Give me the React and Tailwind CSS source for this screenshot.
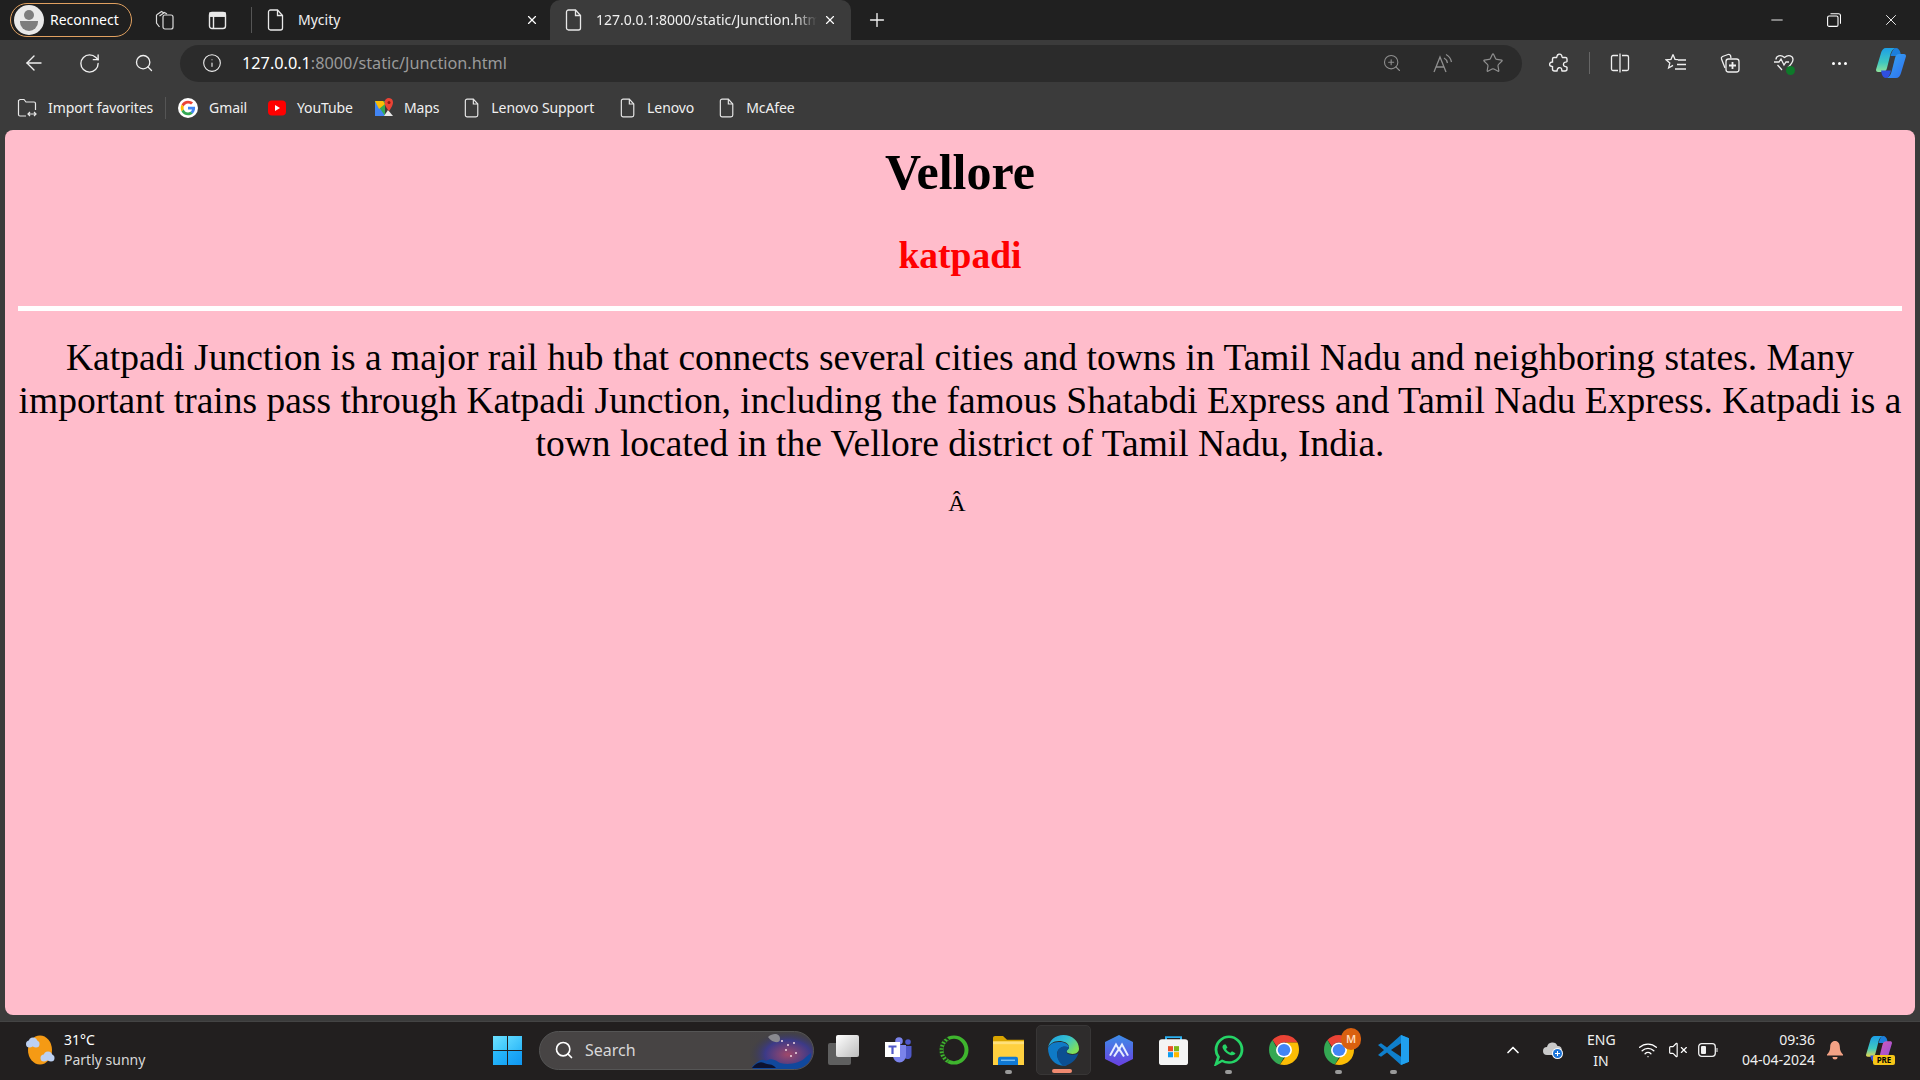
import { ArrowLeft, RotateCw, Search, Info, ZoomIn, Star, Plus, X, Minus, ChevronUp, Wifi, VolumeX } from "lucide-react";

const ui = { fontFamily: '"Noto Sans", sans-serif' };

function Doc({ className = "w-[18px] h-[22px]" }) {
  return (
    <svg className={className} viewBox="0 0 18 22" fill="none" stroke="#e8e8e8" strokeWidth="1.3">
      <path d="M3.5 1h7l5 5.5V19a2 2 0 0 1-2 2h-10a2 2 0 0 1-2-2V3a2 2 0 0 1 2-2z" />
      <path d="M10.5 1v5.5h5" />
    </svg>
  );
}

function Avatar() {
  return (
    <div className="w-[30px] h-[30px] rounded-full bg-[#e9e9e9] flex flex-col items-center justify-center overflow-hidden">
      <div className="w-[10px] h-[10px] rounded-full bg-[#7d7d7d]" />
      <div className="w-[18px] h-[10px] mt-[1px] rounded-b-full bg-[#7d7d7d]" />
    </div>
  );
}

function Workspaces() {
  return (
    <svg className="w-5 h-5" viewBox="0 0 20 20" fill="none" stroke="#dcdcdc" strokeWidth="1.2">
      <path d="M1.5 5l5-3.5L9 3M1.5 5v8l3 4" />
      <path d="M4.5 6l5-3.5L12 4" />
      <rect x="8" y="5" width="10" height="14" rx="2" />
    </svg>
  );
}

function TabActions() {
  return (
    <svg className="w-[19px] h-[19px]" viewBox="0 0 19 19" fill="none" stroke="#e8e8e8" strokeWidth="1.4">
      <rect x="1.5" y="1.5" width="16" height="16" rx="2.5" />
      <path d="M1.5 5h16M5.5 5v12.5" />
      <path d="M2 2h15v3H2z" fill="#e8e8e8" />
    </svg>
  );
}

function GoogleG({ size = "w-5 h-5" }) {
  return (
    <svg className={size} viewBox="0 0 48 48">
      <circle cx="24" cy="24" r="24" fill="#fff" />
      <path fill="#EA4335" d="M24 13c3 0 5.400 1 7.300 2.800l4.800-4.800C33 8.200 28.900 6.500 24 6.500 17.200 6.500 11.300 10.400 8.400 16.100l5.600 4.300C15.400 16.200 19.300 13 24 13z" />
      <path fill="#4285F4" d="M41 24.400c0-1.300-.1-2.200-.3-3.200H24v6.300h9.700c-.4 2.300-1.800 4.400-4 5.800l5.400 4.200C38.700 34.300 41 29.800 41 24.400z" />
      <path fill="#FBBC05" d="M14 27.600c-.4-1.100-.6-2.300-.6-3.600s.2-2.500.6-3.600l-5.600-4.300C7.200 18.500 6.500 21.200 6.500 24s.7 5.500 1.900 7.900l5.600-4.300z" />
      <path fill="#34A853" d="M24 41.500c4.800 0 8.800-1.600 11.100-4.300l-5.400-4.200c-1.500 1-3.400 1.700-5.700 1.700-4.700 0-8.600-3.200-10-7.400l-5.600 4.300c2.900 5.700 8.800 9.900 15.600 9.900z" />
    </svg>
  );
}

function YouTube() {
  return (
    <svg className="w-[18px] h-[18px]" viewBox="0 0 18 18">
      <rect x="0" y="1.500" width="18" height="15" rx="4" fill="#f00" />
      <path d="M7 6l5 3-5 3z" fill="#fff" />
    </svg>
  );
}

function MapsIcon() {
  return (
    <svg className="w-[18px] h-5" viewBox="0 0 18 20">
      <path d="M0 3h10v15H0z" fill="#34a853" />
      <path d="M0 3l10 15H0z" fill="#4285f4" />
      <path d="M0 3h8l2 3-6 5z" fill="#fbbc05" />
      <path d="M9 18l4-6 5 6z" fill="#e8e8e8" />
      <path d="M14 0a4.500 4.500 0 0 0-4.500 4.500C9.500 8 14 13 14 13s4-5 4-8.500A4.500 4.500 0 0 0 14 0z" fill="#ea4335" />
      <circle cx="14" cy="4.500" r="1.500" fill="#8c1c13" />
    </svg>
  );
}

function ImportFav() {
  return (
    <svg className="w-5 h-5" viewBox="0 0 20 20" fill="none" stroke="#e8e8e8" strokeWidth="1.2">
      <path d="M9 18H3a1.500 1.500 0 0 1-1.500-1.500V2.500L3 1.500h4l2 2.500h8a1.500 1.500 0 0 1 1.500 1.500V12" />
      <path d="M11 16h8M13 14l-2 2 2 2M17 14l2 2-2 2" />
    </svg>
  );
}

function ReadAloud() {
  return (
    <svg className="w-5 h-5" viewBox="0 0 20 20" fill="none" stroke="#8f8f8f" strokeWidth="1.3">
      <path d="M1 19L7 4l6 15M3 14h8" />
      <path d="M11 5c2 1 3 2.500 3.500 5M13 1.500c3 1.500 4.800 4 5.500 7.500" />
    </svg>
  );
}

function Extensions() {
  return (
    <svg className="w-5 h-5" viewBox="0 0 20 20" fill="none" stroke="#efefef" strokeWidth="1.4">
      <path d="M8 3.200a2.500 2.500 0 0 1 4.500-1c.6.800 0 1.800 1 2.300h3a1.500 1.500 0 0 1 1.500 1.500v2.500c-.6 1-1.800.4-2.600 1a2.400 2.400 0 0 0 0 3.800c.8.600 2 0 2.600 1v1.700a2 2 0 0 1-2 2h-3c-.6-1 .2-2.200-1-3a2.400 2.400 0 0 0-3.600 1.200c-.2.700-.2 1.300-.4 1.800H5.500a2 2 0 0 1-2-2v-2.500c-1-.6-2.400.2-2.800-1.500a2.500 2.500 0 0 1 2.800-3V6a1.500 1.500 0 0 1 1.500-1.500h2.500c.3-.4.500-.8.500-1.300z" />
    </svg>
  );
}

function SplitScreen() {
  return (
    <svg className="w-5 h-5" viewBox="0 0 20 20" fill="none" stroke="#efefef" strokeWidth="1.3">
      <path d="M8 2.500H3A1.500 1.500 0 0 0 1.500 4v12A1.500 1.500 0 0 0 3 17.500h5M12 2.500h5A1.500 1.500 0 0 1 18.500 4v12a1.500 1.500 0 0 1-1.500 1.500h-5M10 .5v19" />
    </svg>
  );
}

function Favorites() {
  return (
    <svg className="w-[21px] h-5" viewBox="0 0 21 20" fill="none" stroke="#efefef" strokeWidth="1.3">
      <path d="M8 1.500l2 4.800 3 .3M8 1.500L6 6.300l-5 .5 3.800 3.300L3.600 15l4.400-2.600" />
      <path d="M13 7h8M12 11.500h9M10 16h11" strokeWidth="1.600" />
    </svg>
  );
}

function Collections() {
  return (
    <svg className="w-5 h-5" viewBox="0 0 20 20" fill="none" stroke="#efefef" strokeWidth="1.3">
      <path d="M5 15L1.500 6a2 2 0 0 1 1-2.500L8 1.500a2 2 0 0 1 2.500 1L11 5" />
      <rect x="6" y="6" width="13" height="13" rx="2.500" />
      <path d="M12.500 9v7M9 12.500h7" strokeWidth="1.800" />
    </svg>
  );
}

function Health() {
  return (
    <div className="relative w-[21px] h-5">
      <svg className="w-[21px] h-5" viewBox="0 0 21 20" fill="none" stroke="#efefef" strokeWidth="1.3">
        <path d="M2 6.500C2 3 6.500 1 10.500 4.500 14.500 1 19 3 19 6.500c0 3-3 6-5 8M8 17L3.500 12" />
        <path d="M0 9h5l2-3 3 6 2-3h3" />
      </svg>
      <div className="absolute right-0 bottom-[-2px] w-[9px] h-[9px] rounded-full bg-[#0e7a2a]" />
    </div>
  );
}

function Copilot({ className, id = "a", light }) {
  return (
    <svg className={className} viewBox="0 0 30 30">
      <defs>
        <linearGradient id={`cp1${id}`} x1="0" y1="0" x2="0" y2="1">
          <stop offset="0" stopColor="#1d9fe8" />
          <stop offset="0.6" stopColor="#3fc8c0" />
          <stop offset="1" stopColor={light ? "#e8d84a" : "#8fe29a"} />
        </linearGradient>
        <linearGradient id={`cp2${id}`} x1="0" y1="0" x2="1" y2="1">
          <stop offset="0" stopColor={light ? "#e05ab0" : "#35a8f0"} />
          <stop offset="1" stopColor={light ? "#8a50e0" : "#2f6ff0"} />
        </linearGradient>
      </defs>
      <path d="M10 0h10c-4 1-5 4-6 8l-3 12c-.6 2.500-2 4-4.500 4H2C.5 24-.4 22.800.2 21L5 5c.8-3 2.500-5 5-5z" fill={`url(#cp1${id})`} />
      <path d="M20 0c2 0 4 2 4.500 5l.5 3h-10.500c1-3 2.500-8 5.500-8z" fill="#1c7fdc" />
      <path d="M20 30H10c4-1 5-4 6-8l3-12c.6-2.500 2-4 4.500-4H28c1.500 0 2.400 1.200 1.800 3L25 25c-.8 3-2.500 5-5 5z" fill={`url(#cp2${id})`} />
      <path d="M10 30c-2 0-4-2-4.500-5l-.5-2.500h10c-1 3-2 7.500-5 7.500z" fill="#2f4fe0" />
    </svg>
  );
}

function Weather() {
  return (
    <svg className="w-[30px] h-[30px]" viewBox="0 0 30 30">
      <ellipse cx="15" cy="15" rx="12" ry="14.500" fill="#f59a14" />
      <g fill="#bcd0f2">
        <circle cx="8" cy="7" r="4.500" />
        <circle cx="4.500" cy="9" r="3.500" />
        <circle cx="11" cy="9" r="3.500" />
        <circle cx="23" cy="21" r="4.500" />
        <circle cx="19" cy="23" r="3.500" />
        <circle cx="26" cy="23" r="3.500" />
      </g>
    </svg>
  );
}

function WinLogo() {
  return (
    <div className="w-[29px] h-[29px] grid grid-cols-2 gap-[1px] shrink-0">
      <div className="bg-gradient-to-br from-[#6ce0ff] to-[#38c6fb]" />
      <div className="bg-gradient-to-br from-[#5cd8ff] to-[#2cb8f8]" />
      <div className="bg-gradient-to-br from-[#2cbcfb] to-[#16a4f6]" />
      <div className="bg-gradient-to-br from-[#22aef9] to-[#0f96f0]" />
    </div>
  );
}

function NightScene() {
  return (
    <svg className="w-[63px] h-[39px]" viewBox="0 0 63 39">
      <defs>
        <radialGradient id="night" cx="0.6" cy="0.6" r="0.6">
          <stop offset="0" stopColor="#a0486a" />
          <stop offset="0.6" stopColor="#3c3a88" />
          <stop offset="1" stopColor="#3a3a46" stopOpacity="0.1" />
        </radialGradient>
      </defs>
      <rect width="63" height="39" fill="url(#night)" />
      <path d="M18 6c6-5 12-3 12 2s-8 4-12-2z" fill="#8a8a90" />
      <g fill="#f0d8e0">
        <circle cx="32" cy="10" r="1" /><circle cx="38" cy="14" r="1" /><circle cx="44" cy="12" r="1" />
        <circle cx="36" cy="19" r="1" /><circle cx="46" cy="22" r="1" /><circle cx="41" cy="25" r="1" />
      </g>
      <path d="M2 36c6-6 10-9 14-6 6-4 10 0 14 2 8 2 20 1 26-6l5-4c0 8-4 16-12 17H4z" fill="#10489c" />
      <path d="M2 37c4-5 8-7 12-5s8 0 12 5z" fill="#0c1230" />
    </svg>
  );
}

function TaskView() {
  return (
    <div className="relative w-[31px] h-[30px]">
      <div className="absolute left-0 bottom-0 w-[23px] h-[22px] rounded-[2px] bg-[#5f5f5f]" />
      <div className="absolute right-0 top-0 w-[23px] h-[22px] rounded-[2px] bg-gradient-to-br from-white to-[#bdbdbd]" />
    </div>
  );
}

function Teams() {
  return (
    <svg className="w-[27px] h-[27px]" viewBox="0 0 27 27">
      <circle cx="14" cy="4" r="3.800" fill="#7b83eb" />
      <circle cx="23" cy="5" r="2.800" fill="#5059c9" />
      <path d="M19 9h7.500v9a4 4 0 0 1-7.500 2z" fill="#5059c9" />
      <path d="M8 8h13v11a6.500 6.500 0 0 1-13 0z" fill="#7b83eb" />
      <rect x="0" y="5" width="15" height="15" fill="#fff" />
      <path d="M3.500 8.500h8v2H8.600V17H6.400v-6.500H3.500z" fill="#5059c9" />
    </svg>
  );
}

function Ring() {
  return (
    <svg className="w-[30px] h-[30px]" viewBox="0 0 30 36" preserveAspectRatio="none" fill="none">
      <ellipse cx="15" cy="18" rx="12.500" ry="15.500" stroke="#3fb52e" strokeWidth="4" />
      <path d="M9 4C4 8 2 13 2 18s2 10 7 14" stroke="#23301f" strokeWidth="4.500" strokeDasharray="2 2" />
    </svg>
  );
}

function Folder() {
  return (
    <svg className="w-[31px] h-[29px]" viewBox="0 0 31 32" preserveAspectRatio="none">
      <path d="M0 2a2 2 0 0 1 2-2h8l4 4h17v4H0z" fill="#d9a400" />
      <path d="M0 6h31v26H0z" fill="#ffd040" />
      <path d="M0 6h31v3H0z" fill="#ffe07a" />
      <path d="M5 32V25a2 2 0 0 1 2-2h16a2 2 0 0 1 2 2v7z" fill="#0f78d4" />
      <path d="M8 26h14v1.500H8z" fill="#7dc4f5" />
    </svg>
  );
}

function Edge() {
  return (
    <svg className="w-[31px] h-[31px]" viewBox="0 0 31 36" preserveAspectRatio="none">
      <defs>
        <linearGradient id="edgeA" x1="0" y1="0" x2="1" y2="0.600">
          <stop offset="0" stopColor="#1b9de2" />
          <stop offset="0.55" stopColor="#35c1d1" />
          <stop offset="1" stopColor="#7fe05a" />
        </linearGradient>
      </defs>
      <path d="M15.500 0C24 0 31 7 31 16c0 3-2 6-6.500 6-4 0-6-1.500-6-3 0-2 2.500-2 2.500-5C21 9.500 16 7 11 7 5 7 1 11 0 15 1 6 7.500 0 15.500 0z" fill="url(#edgeA)" />
      <path d="M0 15c2-6 8-7 12-7 5 0 9 3 9 6.500-4-2-10-1-11.500 5C8 26 12 33 19 35.500 8 37 0 28 0 15z" fill="#0f7ac6" />
      <path d="M9.500 20c1-6 7-8 11.500-5.500 0 2.500-2.500 3-2.500 5 0 2 2.500 3.500 6.500 3.500 2.500 0 4.500-1 5.500-2-2 8-8 14-15 15C11 32 8 26 9.500 20z" fill="#0c4f92" />
    </svg>
  );
}

function Hex() {
  return (
    <svg className="w-7 h-[31px]" viewBox="0 0 28 36" preserveAspectRatio="none">
      <defs>
        <linearGradient id="hexA" x1="0" y1="0" x2="0" y2="1">
          <stop offset="0" stopColor="#3d8de8" />
          <stop offset="1" stopColor="#6a3fe0" />
        </linearGradient>
      </defs>
      <path d="M14 0l14 8v20l-14 8L0 28V8z" fill="url(#hexA)" />
      <path d="M5 24L11 11l3 6 3-6 6 13M9 25l5-9 5 9" fill="none" stroke="#e8eeff" strokeWidth="2" />
    </svg>
  );
}

function StoreIcon() {
  return (
    <svg className="w-[29px] h-[30px]" viewBox="0 0 29 35" preserveAspectRatio="none">
      <path d="M7 7V2.500h15V7" fill="none" stroke="#2bb0f0" strokeWidth="2" />
      <rect x="0" y="5" width="29" height="30" rx="3" fill="#f4f4f4" />
      <rect x="9" y="13" width="5" height="6" fill="#e8502a" />
      <rect x="15" y="13" width="5" height="6" fill="#7cb518" />
      <rect x="9" y="20" width="5" height="6" fill="#0f9cf0" />
      <rect x="15" y="20" width="5" height="6" fill="#ffb900" />
    </svg>
  );
}

function WhatsApp() {
  return (
    <svg className="w-[30px] h-[31px]" viewBox="0 0 30 36" preserveAspectRatio="none" fill="none">
      <path d="M2 34l2.500-8.500C2.800 23 2 20 2 17 2 9 8 2 15 2s13 7 13 15-6 15-13 15c-2.500 0-5-.7-7-2z" stroke="#25d366" strokeWidth="2.800" />
      <path d="M10 11c-1.500 1-2 3-1 5 1.500 3.500 4.500 6.500 8 7.500 2 .5 4-.5 4.500-2.200l-3.500-2.300-1.700 1.500c-2-.8-3.400-2.300-4.300-4.300l1.500-1.700-1.700-3.500z" fill="#25d366" />
    </svg>
  );
}

function Chrome() {
  return (
    <svg className="w-[30px] h-[30px]" viewBox="0 0 30 36" preserveAspectRatio="none">
      <path d="M15 0c6 0 11 3.500 13.500 9H15c-3.500 0-6 2-7 5L3.500 6C6 2.500 10 0 15 0z" fill="#ea4335" />
      <path d="M0 18C0 13 1.200 9 3.500 6L10 20c1 2.500 3 4.500 6 4.500L11 35.500C5 33.500 0 26.500 0 18z" fill="#34a853" />
      <path d="M28.500 9c1 2.500 1.500 6 1.500 9 0 10-6.500 18-15 18-1.500 0-2.800-.2-4-.5l7-12c1.500-1.500 2-3.500 2-5.500 0-3.500-1-6-3-9z" fill="#fbbc05" />
      <ellipse cx="15" cy="18" rx="8" ry="9" fill="#fff" />
      <ellipse cx="15" cy="18" rx="6.300" ry="7.300" fill="#4285f4" />
    </svg>
  );
}

function VsCode() {
  return (
    <svg className="w-[31px] h-[30px]" viewBox="0 0 31 36" preserveAspectRatio="none">
      <path d="M23 0l8 4v28l-8 4L9 21l-6 5-3-2 6-6-6-6 3-2 6 5z" fill="#0f7fcc" />
      <path d="M23 0l8 4v28l-8 4z" fill="#20a0ee" />
      <path d="M23 10L13 18l10 8z" fill="#231f20" />
    </svg>
  );
}

function CloudSync() {
  return (
    <svg className="w-5 h-[18px]" viewBox="0 0 20 18">
      <path d="M4 14a4 4 0 0 1 0-8 5.500 5.500 0 0 1 10.500-1A4 4 0 0 1 15 13l-3 1z" fill="#c9c9c9" />
      <circle cx="14.500" cy="12.500" r="5.500" fill="#fff" />
      <circle cx="14.500" cy="12.500" r="4.500" fill="#1a73d8" />
      <path d="M12 12.500h5M14.500 10v5" stroke="#fff" strokeWidth="1" />
    </svg>
  );
}

function Battery() {
  return (
    <svg className="w-5 h-[14px]" viewBox="0 0 20 14" fill="none">
      <rect x=".7" y=".7" width="16.600" height="12.600" rx="3" stroke="#f0f0f0" strokeWidth="1.300" />
      <rect x="3" y="3" width="5" height="8" rx="1" fill="#f0f0f0" />
      <path d="M18.500 5v4h1V5z" fill="#f0f0f0" />
    </svg>
  );
}

function Bell() {
  return (
    <svg className="w-4 h-[19px]" viewBox="0 0 16 19" fill="#f4a285">
      <path d="M8 0c3 0 4.800 2.500 4.800 5.500 0 4 1.200 6 3.200 8v1H0v-1c2-2 3.200-4 3.200-8C3.200 2.500 5 0 8 0z" />
      <path d="M5.500 16h5a2.500 2.500 0 0 1-5 0z" />
    </svg>
  );
}

function TaskCell({ children, dot, active }) {
  return (
    <div className={`relative w-[55px] h-[50px] shrink-0 flex items-center justify-center rounded-[5px] ${active ? "bg-[#2e2c2c] border border-[#383636]" : ""}`}>
      {children}
      {dot && <div className="absolute bottom-[1px] left-[24px] w-[7px] h-[4px] rounded-full bg-[#9a9a9a]" />}
      {active && <div className="absolute bottom-[1px] left-[15px] w-[20px] h-[4px] rounded-full bg-[#f08a70]" />}
    </div>
  );
}

function Bookmark({ icon, label, className }) {
  return (
    <div className={`flex items-center shrink-0 ${className}`}>
      {icon}
      <span className="ml-[11px] mb-[2px] text-[14px] tracking-[-0.1px] text-[#f0f0f0] whitespace-nowrap">{label}</span>
    </div>
  );
}

export default function App() {
  return (
    <div className="h-screen w-screen overflow-hidden flex flex-col bg-[#3b3b3b]" style={ui}>
      {/* title bar */}
      <div className="h-10 shrink-0 bg-[#202020] flex items-center">
        <div className="ml-[10px] w-[122px] h-[34px] rounded-full border border-[#e0a060] flex items-center pl-[3px]">
          <Avatar />
          <span className="ml-[6px] mb-[2px] text-[14px] text-white">Reconnect</span>
        </div>
        <div className="ml-[23px]"><Workspaces /></div>
        <div className="ml-[33px]"><TabActions /></div>
        <div className="ml-[24px] w-[1px] h-[26px] bg-[#555]" />
        <div className="ml-[15px]"><Doc /></div>
        <span className="ml-[13px] mb-[2px] w-[44px] text-[14px] text-[#f0f0f0]">Mycity</span>
        <X className="ml-[183px] w-[14px] h-[14px] text-white" strokeWidth={2} />
        <div className="ml-[11px] w-[301px] h-10 bg-[#3b3b3b] rounded-t-[10px] flex items-center pl-[15px]">
          <Doc />
          <span className="ml-[13px] mb-[2px] w-[221px] overflow-hidden whitespace-nowrap text-[14px] text-[#f0f0f0] [mask-image:linear-gradient(to_right,black_90%,transparent)]">127.0.0.1:8000/static/Junction.html</span>
          <X className="ml-[6px] w-[14px] h-[14px] text-white" strokeWidth={2} />
        </div>
        <Plus className="ml-[15px] w-[22px] h-[22px] text-[#f0f0f0]" strokeWidth={1.5} />
        <div className="ml-auto flex items-center">
          <Minus className="w-[18px] h-[18px] text-white" strokeWidth={1.2} />
          <svg className="ml-[41px] w-[14px] h-[14px]" viewBox="0 0 14 14" fill="none" stroke="#fff" strokeWidth="1.100">
            <rect x=".6" y="3" width="10.400" height="10.400" rx="1.500" />
            <path d="M3.500 .7h8a2 2 0 0 1 2 2v8" />
          </svg>
          <X className="ml-[41px] mr-[20px] w-[18px] h-[18px] text-white" strokeWidth={1.2} />
        </div>
      </div>

      {/* toolbar */}
      <div className="h-[46px] shrink-0 flex items-center">
        <ArrowLeft className="ml-[22px] w-[24px] h-[24px] text-[#f0f0f0]" strokeWidth={1.4} />
        <RotateCw className="ml-[32px] w-[23px] h-[23px] text-[#f0f0f0]" strokeWidth={1.4} />
        <Search className="ml-[33px] w-[20px] h-[20px] text-[#f0f0f0]" strokeWidth={1.6} />
        <div className="ml-[26px] w-[1342px] h-[37px] rounded-full bg-[#2b2b2b] flex items-center pl-[22px]">
          <Info className="w-[20px] h-[20px] text-[#f0f0f0]" strokeWidth={1.3} />
          <span className="ml-[20px] text-[16.25px] text-[#9a9a9a]">
            <span className="text-white">127.0.0.1</span>:8000/static/Junction.html
          </span>
          <ZoomIn className="ml-auto w-[20px] h-[20px] text-[#8f8f8f]" strokeWidth={1.3} />
          <div className="ml-[31px]"><ReadAloud /></div>
          <Star className="ml-[29px] mr-[18px] w-[22px] h-[22px] text-[#8f8f8f]" strokeWidth={1.3} />
        </div>
        <div className="ml-[27px]"><Extensions /></div>
        <div className="ml-[20px] w-[1px] h-[22px] bg-[#666]" />
        <div className="ml-[20px]"><SplitScreen /></div>
        <div className="ml-[35px]"><Favorites /></div>
        <div className="ml-[34px]"><Collections /></div>
        <div className="ml-[34px]"><Health /></div>
        <div className="ml-[37px] flex gap-[3px]">
          <div className="w-[3px] h-[3px] rounded-full bg-white" />
          <div className="w-[3px] h-[3px] rounded-full bg-white" />
          <div className="w-[3px] h-[3px] rounded-full bg-white" />
        </div>
        <Copilot className="ml-[29px] w-[30px] h-[30px]" />
      </div>

      {/* favourites bar */}
      <div className="h-[44px] shrink-0 flex items-center">
        <Bookmark className="ml-[17px]" icon={<ImportFav />} label="Import favorites" />
        <div className="ml-[12px] w-[1px] h-[22px] bg-[#555]" />
        <Bookmark className="ml-[12px]" icon={<GoogleG />} label="Gmail" />
        <Bookmark className="ml-[21px]" icon={<YouTube />} label="YouTube" />
        <Bookmark className="ml-[22px]" icon={<MapsIcon />} label="Maps" />
        <Bookmark className="ml-[25px]" icon={<Doc className="w-[16px] h-[20px]" />} label="Lenovo Support" />
        <Bookmark className="ml-[26px]" icon={<Doc className="w-[16px] h-[20px]" />} label="Lenovo" />
        <Bookmark className="ml-[25px]" icon={<Doc className="w-[16px] h-[20px]" />} label="McAfee" />
      </div>

      {/* page */}
      <main
        className="mx-[5px] h-[885px] shrink-0 rounded-[8px] bg-[#ffbccb] px-[13px] text-center text-black overflow-hidden"
        style={{ fontFamily: '"Liberation Serif", serif' }}
      >
        <h1 className="mt-[15px] text-[50px] leading-[55px] font-bold">Vellore</h1>
        <h2 className="mt-[34px] text-[37.5px] leading-[43px] font-bold text-[#ff0000]">katpadi</h2>
        <hr className="mt-[29px] h-[5px] border-0 bg-white" />
        <p className="mt-[25px] text-[37.5px] leading-[43px]">
          Katpadi Junction is a major rail hub that connects several cities and towns in Tamil Nadu and neighboring states. Many important trains pass through Katpadi Junction, including the famous Shatabdi Express and Tamil Nadu Express. Katpadi is a town located in the Vellore district of Tamil Nadu, India.
        </p>
        <p className="mt-[24px] text-[24px] leading-[28px]">Â&nbsp;</p>
      </main>

      {/* taskbar */}
      <div className="mt-[6px] h-[59px] shrink-0 bg-[#221f1f] border-t border-[#444] pb-[2px] flex items-center text-white">
        <div className="w-[493px] shrink-0 flex items-center pl-[25px]">
          <Weather />
          <div className="ml-[9px] text-[14px] leading-[20px]">
            <div>31°C</div>
            <div className="text-[#d8d8d8]">Partly sunny</div>
          </div>
        </div>
        <WinLogo />
        <div className="ml-[17px] w-[275px] h-[39px] shrink-0 rounded-full bg-[#474444] border border-[#555] flex items-center pl-[14px] overflow-hidden">
          <Search className="w-[20px] h-[20px] text-white" strokeWidth={2} />
          <span className="ml-[11px] text-[16px] text-[#d8d8d8]">Search</span>
          <div className="ml-auto"><NightScene /></div>
        </div>
        <div className="ml-[2px] flex items-center">
          <TaskCell><TaskView /></TaskCell>
          <TaskCell><Teams /></TaskCell>
          <TaskCell><Ring /></TaskCell>
          <TaskCell dot><Folder /></TaskCell>
          <TaskCell active><Edge /></TaskCell>
          <TaskCell><Hex /></TaskCell>
          <TaskCell><StoreIcon /></TaskCell>
          <TaskCell dot><WhatsApp /></TaskCell>
          <TaskCell><Chrome /></TaskCell>
          <TaskCell dot>
            <Chrome />
            <div className="absolute top-[3px] right-[5px] w-[20px] h-[22px] rounded-full bg-[#d9600f] flex items-center justify-center text-[11px] font-semibold text-[#ffd9b8]">M</div>
          </TaskCell>
          <TaskCell dot><VsCode /></TaskCell>
        </div>
        <ChevronUp className="ml-[82px] w-[20px] h-[20px] text-white" strokeWidth={2} />
        <div className="ml-[20px]"><CloudSync /></div>
        <div className="ml-[24px] w-[28px] text-center text-[14px] leading-[21px] text-[#f0f0f0]">
          <div>ENG</div>
          <div>IN</div>
        </div>
        <Wifi className="ml-[23px] w-[20px] h-[20px] text-white" strokeWidth={1.6} />
        <VolumeX className="ml-[10px] w-[20px] h-[20px] text-white" strokeWidth={1.4} />
        <div className="ml-[10px]"><Battery /></div>
        <div className="ml-[19px] w-[78px] text-right text-[14px] leading-[20px] text-[#f0f0f0] whitespace-nowrap">
          <div>09:36</div>
          <div>04-04-2024</div>
        </div>
        <div className="ml-[12px]"><Bell /></div>
        <div className="relative ml-[23px] w-[29px] h-[29px]">
          <Copilot className="w-[26px] h-[26px]" id="b" light />
          <div className="absolute bottom-0 right-0 w-[22px] h-[10px] rounded-[2px] bg-[#f5c518] text-[8px] leading-[10px] font-bold text-black text-center">PRE</div>
        </div>
      </div>
    </div>
  );
}
